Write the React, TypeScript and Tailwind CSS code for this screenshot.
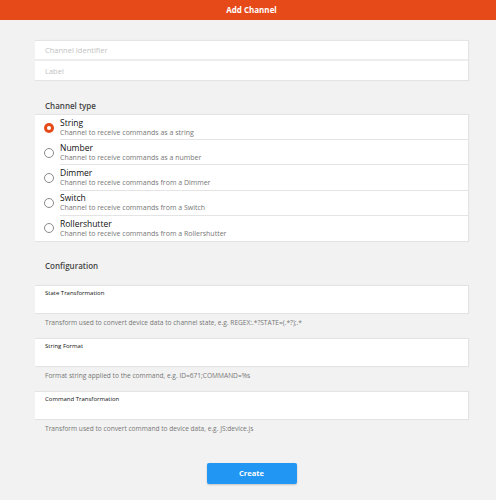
import { useState } from 'react';

type ChannelType = {
  id: string;
  title: string;
  description: string;
};

const channelTypes: ChannelType[] = [
  { id: 'string', title: 'String', description: 'Channel to receive commands as a string' },
  { id: 'number', title: 'Number', description: 'Channel to receive commands as a number' },
  { id: 'dimmer', title: 'Dimmer', description: 'Channel to receive commands from a Dimmer' },
  { id: 'switch', title: 'Switch', description: 'Channel to receive commands from a Switch' },
  { id: 'rollershutter', title: 'Rollershutter', description: 'Channel to receive commands from a Rollershutter' },
];

const configFields = [
  { label: 'State Transformation', help: 'Transform used to convert device data to channel state, e.g. REGEX:.*?STATE=(.*?);.*' },
  { label: 'String Format', help: 'Format string applied to the command, e.g. ID=671;COMMAND=%s' },
  { label: 'Command Transformation', help: 'Transform used to convert command to device data, e.g. JS:device.js' },
];

export default function App() {
  const [selected, setSelected] = useState('string');

  return (
    <div className="min-h-[500px] bg-[#f2f2f2] font-['Open_Sans',sans-serif]">
      {/* Barra superior */}
      <div className="h-[20px] bg-[#e64a19] pl-[35px] pr-[28px] flex items-center justify-center">
        <span className="text-white text-[8px] font-bold">Add Channel</span>
      </div>

      <div className="pl-[35px] pr-[28px] pt-[20px] pb-[17px]">
        {/* Identificador y etiqueta */}
        <div className="bg-white border-t border-b border-[#e4e4e4] shadow-[1px_0_1px_rgba(0,0,0,0.06)]">
          <input
            placeholder="Channel Identifier"
            className="block w-full h-[20px] px-[10px] text-[7.5px] text-[#333] placeholder-[#c2c2c2] outline-none border-b-2 border-[#ededed]"
          />
          <input
            placeholder="Label"
            className="block w-full h-[19px] px-[10px] text-[7.5px] text-[#333] placeholder-[#c2c2c2] outline-none"
          />
        </div>

        {/* Tipo de canal */}
        <div className="h-[33px] flex items-end pb-[2px] pl-[10px] text-[8px] font-semibold text-[#444]">
          Channel type
        </div>
        <div className="bg-white border-t border-b border-[#e4e4e4] shadow-[1px_0_1px_rgba(0,0,0,0.06)]">
          {channelTypes.map((t, i) => (
            <div
              key={t.id}
              onClick={() => setSelected(t.id)}
              className="flex items-center h-[25.2px] cursor-pointer"
            >
              <div className="w-[25px] flex justify-center pl-[2px]">
                {selected === t.id ? (
                  <span className="w-[10px] h-[10px] rounded-full bg-[#e64a19] flex items-center justify-center">
                    <span className="w-[4px] h-[4px] rounded-full bg-white" />
                  </span>
                ) : (
                  <span className="w-[10px] h-[10px] rounded-full border border-[#8a8a8a]" />
                )}
              </div>
              <div
                className={`flex-1 h-full flex flex-col justify-center ${
                  i < channelTypes.length - 1 ? 'border-b border-[#e4e4e4]' : ''
                }`}
              >
                <div className="text-[8.5px] leading-[10px] text-[#111]">{t.title}</div>
                <div className="text-[7px] leading-[9px] text-[#777]">{t.description}</div>
              </div>
            </div>
          ))}
        </div>

        {/* Configuración */}
        <div className="h-[43px] flex items-center pt-[6px] pl-[10px] text-[8px] font-semibold text-[#444]">
          Configuration
        </div>
        {configFields.map((f) => (
          <div key={f.label}>
            <div className="bg-white border-t border-b border-[#e4e4e4] h-[29px] px-[10px] pt-[3px] shadow-[1px_0_1px_rgba(0,0,0,0.06)]">
              <div className="text-[6px] leading-[9px] text-[#111]">{f.label}</div>
            </div>
            <div className="h-[24px] flex items-center pb-[6px] pl-[10px] text-[6.6px] text-[#777]">{f.help}</div>
          </div>
        ))}

        <div className="flex justify-center pt-[19px]">
          <button className="w-[90px] h-[21px] rounded-[2px] bg-[#2196f3] text-white text-[7.5px] font-bold shadow-[0_1px_2px_rgba(0,0,0,0.2)]">
            Create
          </button>
        </div>
      </div>
    </div>
  );
}
